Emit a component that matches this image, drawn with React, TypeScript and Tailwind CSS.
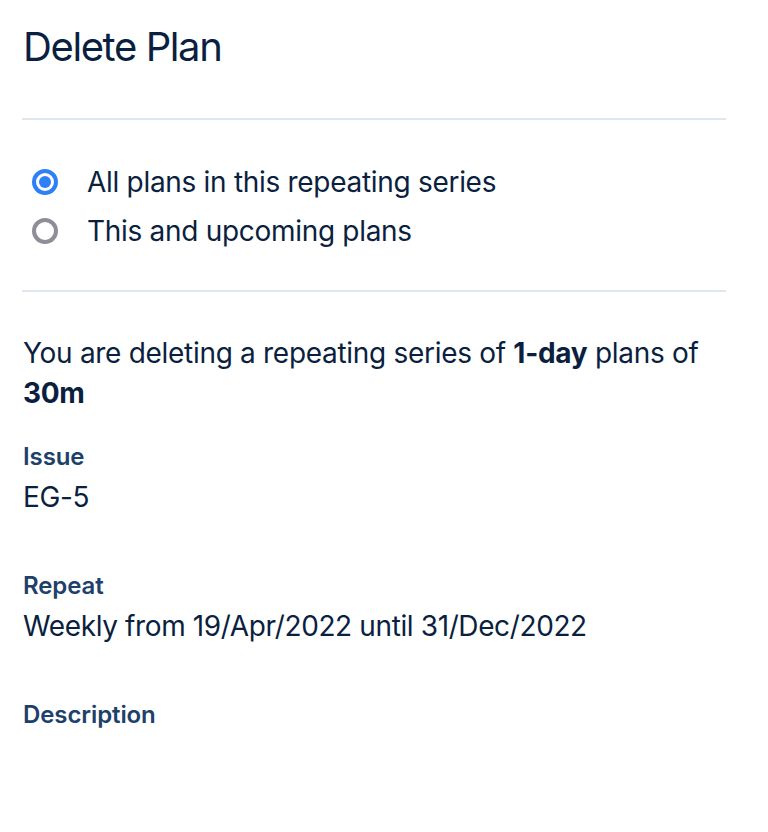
import React, {useState} from "react";

const options = [
  {id: "all", label: "All plans in this repeating series"},
  {id: "upcoming", label: "This and upcoming plans"},
];

function Radio(props: { checked: boolean }) {
  return props.checked ? (
    <span className="flex h-[26px] w-[26px] items-center justify-center rounded-full border-[4px] border-[#2f7ff7] bg-white">
      <span className="h-[12px] w-[12px] rounded-full bg-[#2f7ff7]"/>
    </span>
  ) : (
    <span className="h-[26px] w-[26px] rounded-full border-[4px] border-[#8f8e98] bg-white"/>
  );
}

function Field(props: { label: string, value?: string }) {
  return <div>
    <div className="text-[24px] leading-[32px] font-semibold tracking-[-0.1px] text-[#1d416a]">{props.label}</div>
    {props.value && <div className="mt-[4px] text-[28px] leading-[40px] tracking-[-0.38px]">{props.value}</div>}
  </div>
}

export default function App() {
  const [choice, setChoice] = useState("all");

  return <div className="min-h-[832px] w-[768px] bg-white pl-[23px] pr-[42px] pt-[23px] text-[#0b1f40]"
              style={{fontFamily: "Inter, 'Noto Sans', sans-serif"}}>
    <h1 className="text-[40px] leading-[48px] font-normal tracking-[-1.4px]">Delete Plan</h1>

    <hr className="mt-[47px] border-0 border-t-2 border-[#dfe6ee] -ml-px"/>

    <div className="mt-[38px] mb-[35px] flex flex-col gap-[1px]">
      {options.map(option => (
        <label key={option.id} onClick={() => setChoice(option.id)}
               className="flex h-[48px] cursor-pointer items-center gap-[29px] pl-[9px] text-[28px] leading-[40px] tracking-[-0.3px]">
          <Radio checked={choice === option.id}/>
          <span>{option.label}</span>
        </label>
      ))}
    </div>

    <hr className="border-0 border-t-2 border-[#dfe6ee] -ml-px"/>

    <p className="mt-[41px] text-[28px] leading-[40px] tracking-[-0.3px]">
      You are deleting a repeating series of <b className="font-bold">1-day</b> plans of <b className="font-bold">30m</b>
    </p>

    <div className="mt-[28px] flex flex-col gap-[53px]">
      <Field label="Issue" value="EG-5"/>
      <Field label="Repeat" value="Weekly from 19/Apr/2022 until 31/Dec/2022"/>
      <Field label="Description"/>
    </div>
  </div>
}
